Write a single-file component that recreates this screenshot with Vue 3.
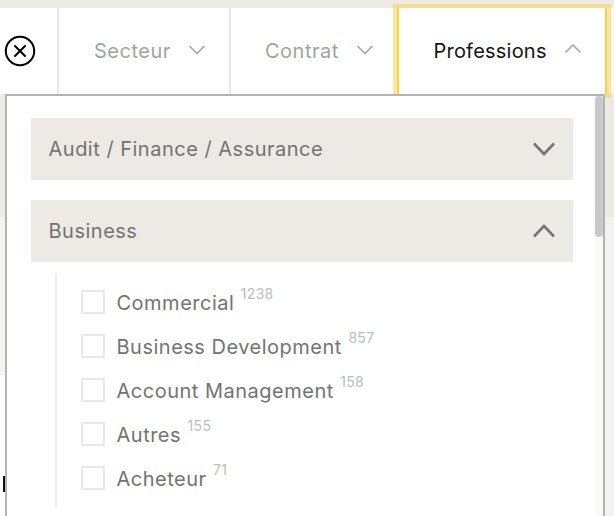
<script setup>
const items = [
  { label: 'Commercial', count: 1238 },
  { label: 'Business Development', count: 857 },
  { label: 'Account Management', count: 158 },
  { label: 'Autres', count: 155 },
  { label: 'Acheteur', count: 71 },
]
</script>

<template>
  <div class="page">
    <div class="band"></div>
    <div class="bar">
      <div class="close-cell">
        <svg width="32" height="32" viewBox="0 0 32 32" fill="none" stroke="#000" stroke-width="2">
          <circle cx="16" cy="16" r="14.2" />
          <path d="M11 11 21 21M21 11 11 21" stroke-linecap="round" />
        </svg>
      </div>
      <div class="tab secteur">
        <span>Secteur</span>
        <svg class="chev" width="18" height="12" viewBox="0 0 18 12" fill="none"><path d="M1.5 2 9 9.5 16.5 2" /></svg>
      </div>
      <div class="tab contrat">
        <span>Contrat</span>
        <svg class="chev" width="18" height="12" viewBox="0 0 18 12" fill="none"><path d="M1.5 2 9 9.5 16.5 2" /></svg>
      </div>
      <div class="tab active">
        <span>Professions</span>
        <svg class="chev up" width="18" height="12" viewBox="0 0 18 12" fill="none"><path d="M1.5 9.5 9 2 16.5 9.5" /></svg>
      </div>
      <div class="bar-end"></div>
    </div>
    <div class="stage">
      <div class="strip left">
        <div class="tone a"></div>
        <div class="tone b"></div>
        <div class="mark"></div>
      </div>
      <div class="panel">
        <div class="content">
          <div class="section">
            <span>Audit / Finance / Assurance</span>
            <svg width="24" height="16" viewBox="0 0 24 16" fill="none"><path d="M2 2.5 12 13 22 2.5" /></svg>
          </div>
          <div class="section second">
            <span>Business</span>
            <svg width="24" height="16" viewBox="0 0 24 16" fill="none"><path d="M2 13.5 12 3 22 13.5" /></svg>
          </div>
          <div class="list">
            <div v-for="item in items" :key="item.label" class="row">
              <span class="box"></span>
              <span class="label">{{ item.label }}</span>
              <span class="count">{{ item.count }}</span>
            </div>
          </div>
        </div>
        <div class="track"><div class="thumb"></div></div>
      </div>
      <div class="strip right">
        <div class="tone a"></div>
        <div class="tone c"></div>
      </div>
    </div>
  </div>
</template>

<style>
html, body { margin: 0; background: #fff; }
</style>

<style scoped>
.page {
  width: 614px;
  height: 516px;
  overflow: hidden;
  display: flex;
  flex-direction: column;
  background: #fff;
  font-family: Inter, "Open Sans", sans-serif;
}
.band { height: 8px; background: #edeae5; flex: none; }
.bar { height: 86px; display: flex; flex: none; background: #fff; }
.close-cell {
  width: 53px;
  border-right: 2px solid #e6e6e6;
  display: flex;
  align-items: center;
  padding-left: 4px;
}
.tab {
  display: flex;
  align-items: center;
  font-size: 20px;
  letter-spacing: 0.5px;
  color: #a3a3a3;
  box-sizing: border-box;
}
.secteur { width: 170px; padding-left: 35px; gap: 17px; }
.contrat { width: 168px; padding-left: 34px; border-left: 2px solid #e6e6e6; gap: 17px; }
.active {
  width: 210px;
  padding-left: 34.5px;
  gap: 17px;
  letter-spacing: 0.22px;
  color: #141414;
  border-left: 2px solid #f9cf4e;
  border-right: 2px solid #f9cf4e;
  box-shadow: 0 0 0 4px rgba(250, 208, 80, 0.55);
  position: relative;
  z-index: 1;
}
.bar-end { flex: 1; background: #fbfaf8; }
.chev { stroke: #a6a6a6; stroke-width: 1.6; flex: none; margin-bottom: 2px; }
.chev.up { margin-bottom: 4px; }
.stage { flex: 1; display: flex; min-height: 0; }
.strip { flex: none; display: flex; flex-direction: column; align-items: flex-end; }
.strip.left { width: 5px; }
.strip.right { width: 9px; }
.tone { width: 100%; flex: none; }
.tone.a { height: 123px; background: #edeae5; }
.left .tone.b { height: 158px; background: #f6f2ee; }
.right .tone.c { flex: 1; background: #f5f1ee; }
.mark { width: 2px; height: 16px; margin-top: 101px; background: #111; }
.panel {
  flex: 1;
  display: flex;
  border: 2px solid #b3b3b3;
  border-bottom: 0;
  background: #fff;
  position: relative;
  z-index: 2;
  min-width: 0;
}
.content { flex: 1; padding: 22px 22px 0 24px; min-width: 0; }
.section {
  height: 62px;
  background: #edeae5;
  display: flex;
  align-items: center;
  justify-content: space-between;
  padding: 0 17px 0 17.5px;
  font-size: 20px;
  letter-spacing: 0.5px;
  color: #737373;
}
.section svg { stroke: #757575; stroke-width: 2.6; flex: none; }
.section.second { margin-top: 20px; }
.list {
  margin: 12px 0 0 24px;
  border-left: 2px solid #ececec;
  height: 234px;
  box-sizing: border-box;
  padding: 16px 0 0 24px;
  display: flex;
  flex-direction: column;
  gap: 20px;
}
.row { display: flex; align-items: center; height: 24px; color: #737373; font-size: 20px; letter-spacing: 0.5px; }
.box { width: 24px; height: 24px; box-sizing: border-box; border: 2px solid #e8e8e8; flex: none; margin-right: 11.5px; }
.label { margin-top: 2px; }
.count { font-size: 14px; letter-spacing: 0.3px; color: #bdbdbd; margin: -18px 0 0 6.5px; }
.track { width: 8px; background: #f9f9f9; flex: none; }
.thumb { height: 141px; background: #c9c9c9; border-radius: 4px; }
</style>
